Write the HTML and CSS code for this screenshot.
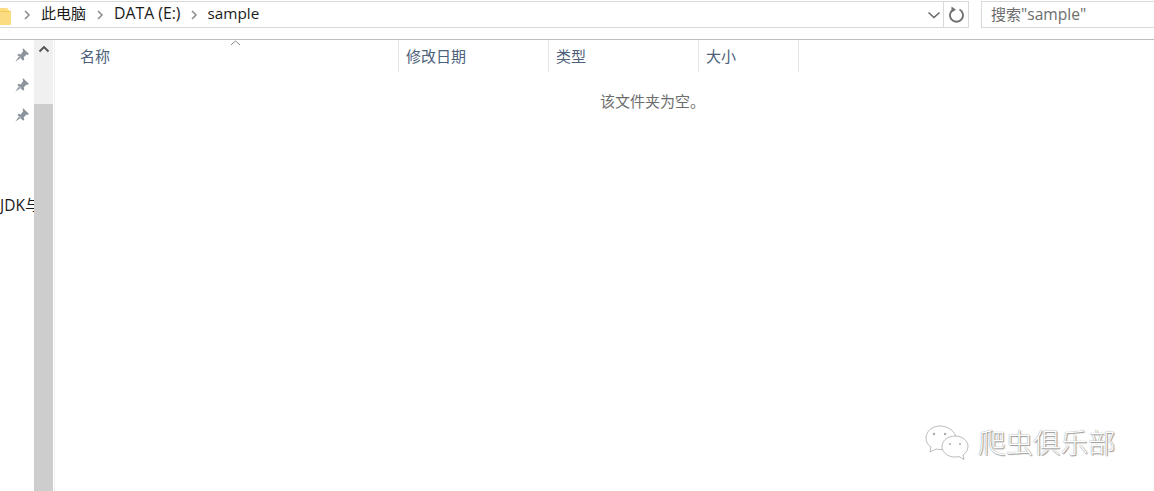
FILE: index.html
```html
<!DOCTYPE html>
<html lang="zh-CN">
<head>
<meta charset="utf-8">
<title>sample</title>
<link rel="stylesheet" href="styles.css">
</head>
<body>
<div class="toolbar">
  <div class="address">
    <svg class="folder" width="11" height="20" viewBox="0 0 11 20"><path d="M0 3h7l2 2v1h2v14H0z" fill="#fcdc80"/><path d="M0 6h11v1H0z" fill="#f4c95c"/></svg>
    <svg class="sep" width="8" height="10" viewBox="0 0 8 10"><path d="M2 1l4 4-4 4" fill="none" stroke="#8a8a8a" stroke-width="1.5"/></svg>
    <span class="crumb">此电脑</span>
    <svg class="sep" width="8" height="10" viewBox="0 0 8 10"><path d="M2 1l4 4-4 4" fill="none" stroke="#8a8a8a" stroke-width="1.5"/></svg>
    <span class="crumb crumb-latin">DATA (E:)</span>
    <svg class="sep" width="8" height="10" viewBox="0 0 8 10"><path d="M2 1l4 4-4 4" fill="none" stroke="#8a8a8a" stroke-width="1.5"/></svg>
    <span class="crumb crumb-last">sample</span>
    <svg class="chevron" width="14" height="8" viewBox="0 0 14 8"><path d="M1.500 1.500L7 6.500l5.500-5" fill="none" stroke="#666" stroke-width="1.500"/></svg>
    <span class="refresh">
      <svg width="16" height="17" viewBox="0 0 16 17"><path d="M5.500 3.500A6.500 6.500 0 1 0 11.500 3.500" fill="none" stroke="#6f6f6f" stroke-width="1.800"/><path d="M3.500 .5l4.500 3.200-4.500 2.800z" fill="#6f6f6f"/></svg>
    </span>
  </div>
  <div class="search">搜索<span class="search-latin">"sample"</span></div>
</div>
<div class="main">
  <nav class="nav">
    <svg class="pin" width="16" height="16" viewBox="0 0 14 14"><path d="M8 1l5 5-1 1-1-.5-2.500 2.500.5 2-1 1-5-5 1-1 2 .5L8 3.500 7.500 2zM4.500 8L1 13l5-3.500z" fill="#8b949c"/></svg>
    <svg class="pin" width="16" height="16" viewBox="0 0 14 14"><path d="M8 1l5 5-1 1-1-.5-2.500 2.500.5 2-1 1-5-5 1-1 2 .5L8 3.500 7.500 2zM4.500 8L1 13l5-3.500z" fill="#8b949c"/></svg>
    <svg class="pin" width="16" height="16" viewBox="0 0 14 14"><path d="M8 1l5 5-1 1-1-.5-2.500 2.500.5 2-1 1-5-5 1-1 2 .5L8 3.500 7.500 2zM4.500 8L1 13l5-3.500z" fill="#8b949c"/></svg>
    <div class="nav-label">JDK与</div>
  </nav>
  <div class="scrollbar">
    <div class="scroll-up">
      <svg width="12" height="8" viewBox="0 0 12 8"><path d="M1.500 6.500L6 2l4.500 4.500" fill="none" stroke="#505050" stroke-width="1.800"/></svg>
    </div>
    <div class="scroll-thumb"></div>
  </div>
  <section class="content">
    <div class="head">
      <div class="col col-name">名称
        <svg class="sort" width="11" height="6" viewBox="0 0 11 6"><path d="M1 5l4.500-4L10 5" fill="none" stroke="#8a8a8a"/></svg>
      </div>
      <div class="col col-date">修改日期</div>
      <div class="col col-type">类型</div>
      <div class="col col-size">大小</div>
    </div>
    <p class="empty">该文件夹为空。</p>
  </section>
</div>
<div class="watermark">
  <svg width="46" height="36" viewBox="0 0 46 36"><g fill="#fff" stroke="#aaa" stroke-width=".8"><path d="M15 1C7 1 1 6.500 1 13c0 4 2 7 5 9l-1 5 6-3c2 .5 3 .5 5 .5 8 0 15-5.500 15-11.500S23 1 15 1z"/><path d="M30 11c-7 0-13 4.500-13 10.500S23 32 30 32c1.500 0 3-.2 4-.5l5 3-1-4.500c3-2 5-5 5-8.500C43 15.500 37 11 30 11z"/></g><g fill="#aaa"><circle cx="9" cy="9" r="1.200"/><circle cx="20" cy="9" r="1.200"/><circle cx="25" cy="19" r="1"/><circle cx="35" cy="19" r="1"/></g></svg>
  <span class="wm-text">爬虫俱乐部</span>
</div>
</body>
</html>
```
FILE: styles.css
```css
* { box-sizing: border-box; }
html, body { margin: 0; height: 100%; }
body {
  width: 1154px;
  height: 491px;
  overflow: hidden;
  background: #fff;
  position: relative;
  font-family: "Open Sans", "Noto Sans CJK SC", sans-serif;
  font-size: 15px;
  color: #1a1a1a;
  display: flex;
  flex-direction: column;
}
.toolbar {
  height: 40px;
  flex: none;
  display: flex;
  align-items: flex-start;
  padding-top: 1px;
  border-bottom: 1px solid #bcbcbc;
}
.address {
  width: 969px;
  height: 27px;
  border: 1px solid #d9d9d9;
  border-left: 0;
  display: flex;
  align-items: center;
  overflow: hidden;
}
.folder { flex: none; margin-right: 12px; }
.sep { flex: none; margin-right: 10px; }
.crumb { margin: 0 10px 2px 0; line-height: 23px; white-space: nowrap; }
.crumb-latin { font-size: 15.8px; margin-right: 9px; }
.crumb-last { font-size: 15.3px; }
.chevron { margin-left: auto; margin-right: 2px; }
.refresh {
  width: 25px;
  height: 25px;
  border-left: 1px solid #d9d9d9;
  display: flex;
  align-items: center;
  justify-content: center;
}
.search {
  width: 173px;
  height: 27px;
  margin-left: 12px;
  border: 1px solid #d9d9d9;
  border-right: 0;
  padding-left: 9px;
  line-height: 25px;
  color: #6d6d6d;
  flex: none;
  flex-grow: 1;
}
.search-latin { font-size: 15.6px; }
.main { flex: 1; display: flex; min-height: 0; }
.nav {
  width: 34px;
  flex: none;
  overflow: hidden;
  display: flex;
  flex-direction: column;
  align-items: flex-end;
  padding: 7px 4px 0 0;
  gap: 14px;
}
.nav-label {
  align-self: flex-start;
  margin: 58px 0 0 0;
  white-space: nowrap;
  width: 34px;
  font-size: 15.5px;
  line-height: 20px;
  color: #1a1a1a;
}
.pin { flex: none; }
.scrollbar {
  width: 19px;
  flex: none;
  background: #cdcdcd;
  display: flex;
  flex-direction: column;
}
.scroll-up {
  height: 16px;
  background: #f0f0f0;
  display: flex;
  justify-content: center;
  padding-top: 5px;
}
.scroll-thumb {
  height: 48px;
  background: #f0f0f0;
}
.content {
  flex: 1;
  border-left: 1px solid #f0f0f0;
  margin-left: 1px;
  position: relative;
}
.head {
  height: 32px;
  display: flex;
  color: #4c607a;
}
.col {
  border-right: 1px solid #e5e5e5;
  line-height: 32px;
  padding-left: 7px;
  flex: none;
}
.col-name { width: 344px; padding-left: 25px; position: relative; }
.col-date, .col-type { width: 150px; }
.col-size { width: 100px; }
.sort { position: absolute; left: 175px; top: 0; }
.empty {
  margin: 19px 0 0;
  padding-left: 545px;
  line-height: 20px;
  font-size: 15px;
  color: #6d6d6d;
}
.watermark {
  position: absolute;
  left: 925px;
  top: 423px;
  display: flex;
  align-items: center;
  gap: 7px;
}
.wm-text {
  font-size: 27.5px;
  line-height: 36px;
  margin-bottom: 4px;
  font-family: "Noto Sans CJK SC", sans-serif;
  font-weight: 300;
  color: #fff;
  text-shadow: 0 0 1px #777, 1px 1px 1px #999;
}
```
